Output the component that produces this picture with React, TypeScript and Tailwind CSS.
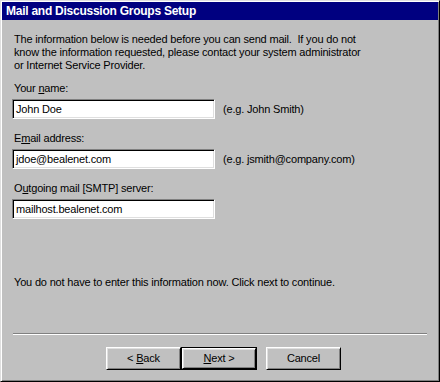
import React from "react";

const font = { fontFamily: '"Liberation Sans", Arial, sans-serif' };

function Field({ label, value, hint, first }: { label: React.ReactNode; value: string; hint?: string; first?: boolean }) {
  return (
    <div className="flex flex-col">
      <div className={(first ? "mt-[10px]" : "mt-[13px]") + " h-[13px] leading-[13px]"}>{label}</div>
      <div className="mt-[4px] flex items-center">
        <div className="w-[203px] h-[20px] bg-white border border-t-[#808080] border-l-[#808080] border-r-white border-b-white shadow-[inset_1px_1px_#000,inset_-1px_-1px_#dfdfdf] pl-[3px] leading-[18px] text-black -ml-[2px]">
          {value}
        </div>
        {hint && <div className="ml-[8px] leading-[13px]">{hint}</div>}
      </div>
    </div>
  );
}

function Btn({ children, def }: { children: React.ReactNode; def?: boolean }) {
  const inner = (
    <div className="h-full w-full flex items-center justify-center border border-t-white border-l-white border-r-black border-b-black shadow-[inset_1px_1px_#dfdfdf,inset_-1px_-1px_#808080] bg-[#c0c0c0] leading-[13px]">
      <span>{children}</span>
    </div>
  );
  if (def) {
    return <div className="w-[76px] h-[23px] border border-black">{inner}</div>;
  }
  return <div className="w-[75px] h-[23px]">{inner}</div>;
}

export default function App() {
  return (
    <div
      style={font}
      className="w-[440px] h-[382px] bg-[#c0c0c0] border border-t-[#dfdfdf] border-l-[#dfdfdf] border-r-black border-b-black shadow-[inset_1px_1px_#fff,inset_-1px_-1px_#808080] p-[1px] text-[11px] tracking-[-0.18px] text-black overflow-hidden"
    >
      <div className="h-[18px] bg-[#000080] text-white font-bold text-[12px] tracking-[-0.25px] leading-[18px] pl-[4px]">
        Mail and Discussion Groups Setup
      </div>
      <div className="flex flex-col px-[12px]">
        <p className="mt-[13px] leading-[13px]">
          The information below is needed before you can send mail.&nbsp; If you do not
          <br />
          know the information requested, please contact your system administrator
          <br />
          or Internet Service Provider.
        </p>
        <Field
          first
          label={
            <>
              Your <u>n</u>ame:
            </>
          }
          value="John Doe"
          hint="(e.g. John Smith)"
        />
        <Field
          label={
            <>
              E<u>m</u>ail address:
            </>
          }
          value="jdoe@bealenet.com"
          hint="(e.g. jsmith@company.com)"
        />
        <Field
          label={
            <>
              O<u>u</u>tgoing mail [SMTP] server:
            </>
          }
          value="mailhost.bealenet.com"
        />
        <p className="mt-[57px] leading-[13px]">
          You do not have to enter this information now. Click next to continue.
        </p>
        <div className="mt-[44px] -mx-[1px] h-[2px] border-t border-t-[#808080] border-b border-b-white" />
        <div className="mt-[12px] flex items-start pl-[92px]">
          <Btn>
            &lt; <u>B</u>ack
          </Btn>
          <Btn def>
            <u>N</u>ext &gt;
          </Btn>
          <div className="ml-[9px]">
            <Btn>Cancel</Btn>
          </div>
        </div>
      </div>
    </div>
  );
}
